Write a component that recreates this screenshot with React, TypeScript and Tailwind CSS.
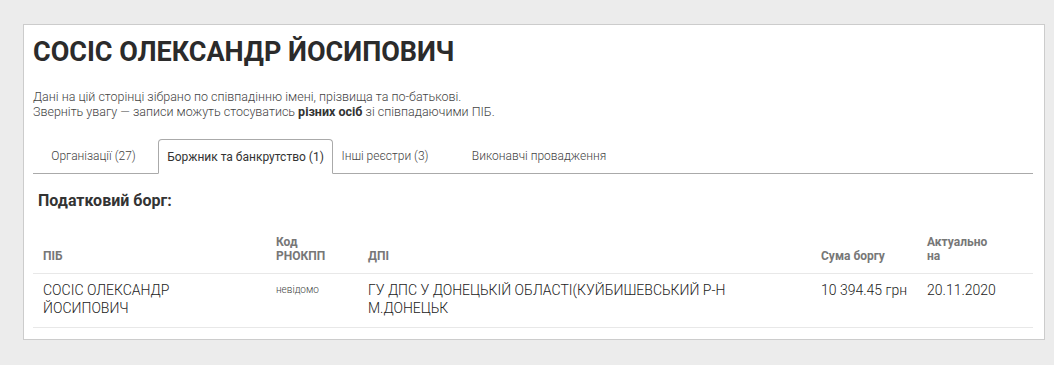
const tabs = [
  { label: "Організації (27)", width: "w-[121px]", active: false },
  { label: "Боржник та банкрутство (1)", width: "w-[175px]", active: true },
  { label: "Інші реєстри (3)", width: "w-[104px]", active: false },
  { label: "Виконавчі провадження", width: "w-[204px]", active: false },
];

export default function App() {
  return (
    <div className="min-h-screen bg-[#ececec] pt-[24px] pl-[23px] font-['Roboto',sans-serif]">
      <div className="w-[1022px] border border-[#cccccc] bg-white pl-[9px] pr-[11px] pt-[10px] pb-[11px]">
        {/* Header */}
        <h1 className="m-0 text-[27px] leading-[34px] font-bold text-[#2b2b2b]">
          СОСІС ОЛЕКСАНДР ЙОСИПОВИЧ
        </h1>
        <p className="mt-[20px] text-[12.5px] leading-[15px] font-light text-[#444]">
          Дані на цій сторінці зібрано по співпадінню імені, прізвища та по-батькові.
          <br />
          Зверніть увагу — записи можуть стосуватись <b className="font-bold text-[#333]">різних осіб</b> зі співпадаючими ПІБ.
        </p>

        {/* Tabs */}
        <div className="mt-[20px] flex border-b border-[#aaaaaa]">
          {tabs.map((t) => (
            <div
              key={t.label}
              className={
                t.active
                  ? `${t.width} h-[35px] -mb-px ml-[4px] flex items-center justify-center rounded-t-[4px] border border-[#aaaaaa] border-b-white bg-white text-[12px] text-[#333]`
                  : `${t.width} h-[34px] flex items-center justify-center text-[12px] font-light text-[#444]`
              }
            >
              {t.label}
            </div>
          ))}
        </div>

        {/* Tax debt */}
        <h2 className="mt-[17px] pl-[5px] text-[16px] leading-[20px] font-bold text-[#333]">
          Податковий борг:
        </h2>
        <table className="mt-[14px] w-[1000px] table-fixed border-collapse">
          <colgroup>
            <col className="w-[233px]" />
            <col className="w-[92px]" />
            <col className="w-[453px]" />
            <col className="w-[106px]" />
            <col className="w-[116px]" />
          </colgroup>
          <thead>
            <tr className="border-b border-[#e8e8e8] text-left align-bottom text-[12px] leading-[14px] font-bold text-[#777]">
              <th className="px-[10px] pt-[10px] pb-[10px] font-bold">ПІБ</th>
              <th className="px-[10px] pt-[10px] pb-[10px] font-bold">
                Код
                <br />
                РНОКПП
              </th>
              <th className="px-[10px] pt-[10px] pb-[10px] font-bold">ДПІ</th>
              <th className="px-[10px] pt-[10px] pb-[10px] font-bold">Сума боргу</th>
              <th className="px-[10px] pt-[10px] pb-[10px] font-bold">
                Актуально
                <br />
                на
              </th>
            </tr>
          </thead>
          <tbody>
            <tr className="border-b border-[#e8e8e8] align-top text-[14px] leading-[18px] font-light text-[#222]">
              <td className="px-[10px] pt-[7px] pb-[10px]">СОСІС ОЛЕКСАНДР ЙОСИПОВИЧ</td>
              <td className="px-[10px] pt-[9px] pb-[10px] text-[10px] leading-[14px] text-[#444]">невідомо</td>
              <td className="px-[10px] pt-[7px] pb-[10px]">
                ГУ ДПС У ДОНЕЦЬКІЙ ОБЛАСТІ(КУЙБИШЕВСЬКИЙ Р-Н М.ДОНЕЦЬК
              </td>
              <td className="whitespace-nowrap px-[10px] pt-[7px] pb-[10px]">10 394.45 грн</td>
              <td className="whitespace-nowrap px-[10px] pt-[7px] pb-[10px]">20.11.2020</td>
            </tr>
          </tbody>
        </table>
      </div>
    </div>
  );
}
